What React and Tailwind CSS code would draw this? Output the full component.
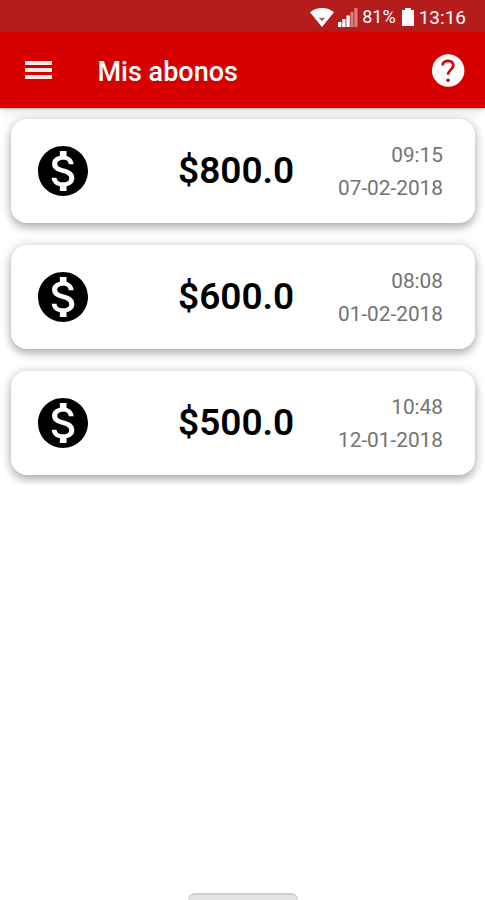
import React from "react";

const abonos = [
    { id: 1, amount: "$800.0", time: "09:15", date: "07-02-2018" },
    { id: 2, amount: "$600.0", time: "08:08", date: "01-02-2018" },
    { id: 3, amount: "$500.0", time: "10:48", date: "12-01-2018" },
];

function StatusBar() {
    return (
        <div className="flex h-8 items-center justify-end bg-[#b71c1c] pr-[19px] pt-[2px] text-white">
            <svg className="h-[19px] w-6" viewBox="0 0 24 19" fill="currentColor">
                <path d="M0 4.2C3.4 1.5 7.4 0 12 0s8.600 1.500 12 4.200L12 19z"/>
                <path d="M8.500 9.300c2 1 5 1 7 0L12 13.300z" fill="#b71c1c" opacity=".8"/>
            </svg>
            <svg className="ml-1 h-[19px] w-5" viewBox="0 0 20 19" fill="currentColor">
                <path d="M0 14h3.400v5H0zM4.200 11h3.400v8H4.200zM8.400 7.500h3.400V19H8.400z"/>
                <path d="M12.500 4h3v15h-3zM16.300 0h3.200v19h-3.200z" opacity=".45"/>
            </svg>
            <span className="ml-1 text-[18px] leading-none">81%</span>
            <svg className="ml-[6px] h-[18px] w-3" viewBox="0 0 12 18" fill="currentColor">
                <path d="M3 0h6v2h3v16H0V2h3z"/>
            </svg>
            <span className="ml-[5px] text-[19px] leading-none">13:16</span>
        </div>
    );
}

function AppBar() {
    return (
        <header className="relative z-10 flex h-[76px] items-center bg-[#d60000] pl-[25px] pr-5 text-white shadow-[0_1px_2px_rgba(0,0,0,0.25),0_4px_9px_rgba(0,0,0,0.1)]">
            <button className="flex w-[27px] flex-col gap-[3px]">
                <span className="h-[4px] w-full bg-[#fde6e6]"></span>
                <span className="h-[4px] w-full bg-[#fde6e6]"></span>
                <span className="h-[4px] w-full bg-[#fde6e6]"></span>
            </button>
            <h1 className="ml-[45.500px] flex-1 pt-[5px] text-[27px] font-medium leading-none">Mis abonos</h1>
            <svg className="h-[33px] w-[33px]" viewBox="0 0 33 33" fill="none">
                <circle cx="16.200" cy="16.500" r="16.200" fill="#fff"/>
                <path d="M10.600 11.500C10.600 8.600 12.900 6.900 16 6.900s5.300 1.700 5.300 4.500c0 4-5.300 4.600-5.300 9.400" stroke="#d60000" strokeWidth="2.700"/>
                <circle cx="16" cy="26.200" r="1.800" fill="#d60000"/>
            </svg>
        </header>
    );
}

function AbonoCard({ abono }) {
    return (
        <li className="flex h-[104px] items-center rounded-[16px] bg-white pl-[22px] pr-[32px] shadow-[0_5px_8px_rgba(0,0,0,0.24),0_0_12px_rgba(0,0,0,0.16)]">
            <svg className="h-[60px] w-[60px]" viewBox="0 0 24 24">
                <path d="M12 2C6.480 2 2 6.480 2 12s4.480 10 10 10 10-4.480 10-10S17.520 2 12 2zm1.410 16.090V20h-2.670v-1.930c-1.710-.36-3.160-1.460-3.270-3.400h1.960c.1 1.050.82 1.870 2.650 1.870 1.960 0 2.400-.98 2.400-1.590 0-.83-.44-1.610-2.670-2.140-2.480-.6-4.180-1.620-4.180-3.670 0-1.720 1.390-2.840 3.110-3.210V4h2.670v1.950c1.860.45 2.790 1.860 2.850 3.390H14.300c-.05-1.110-.64-1.870-2.220-1.870-1.500 0-2.400.68-2.400 1.640 0 .84.65 1.390 2.670 1.910s4.180 1.390 4.180 3.910c-.01 1.830-1.380 2.830-3.120 3.160z"/>
            </svg>
            <span className="ml-[85px] pb-[1px] text-[37px] font-semibold leading-none text-black">{abono.amount}</span>
            <div className="ml-auto pt-[2px] text-right text-[20.800px] leading-[33px] text-[#737373]">
                <p>{abono.time}</p>
                <p>{abono.date}</p>
            </div>
        </li>
    );
}

function App() {
    return (
        <div className="flex h-[900px] w-[485px] flex-col overflow-hidden bg-white font-['Roboto',sans-serif]">
            <StatusBar />
            <AppBar />
            <ul className="flex flex-col gap-[22px] overflow-hidden pl-[11px] pr-[10px] pt-[11px] pb-[10px]">
                {abonos.map((abono) => (
                    <AbonoCard key={abono.id} abono={abono} />
                ))}
            </ul>
            <div className="mx-auto mt-auto h-[7px] w-[110px] rounded-t-[7px] border-x border-t-2 border-[#cfcfcf] bg-[#e4e4e4]"></div>
        </div>
    );
}

export default App;
